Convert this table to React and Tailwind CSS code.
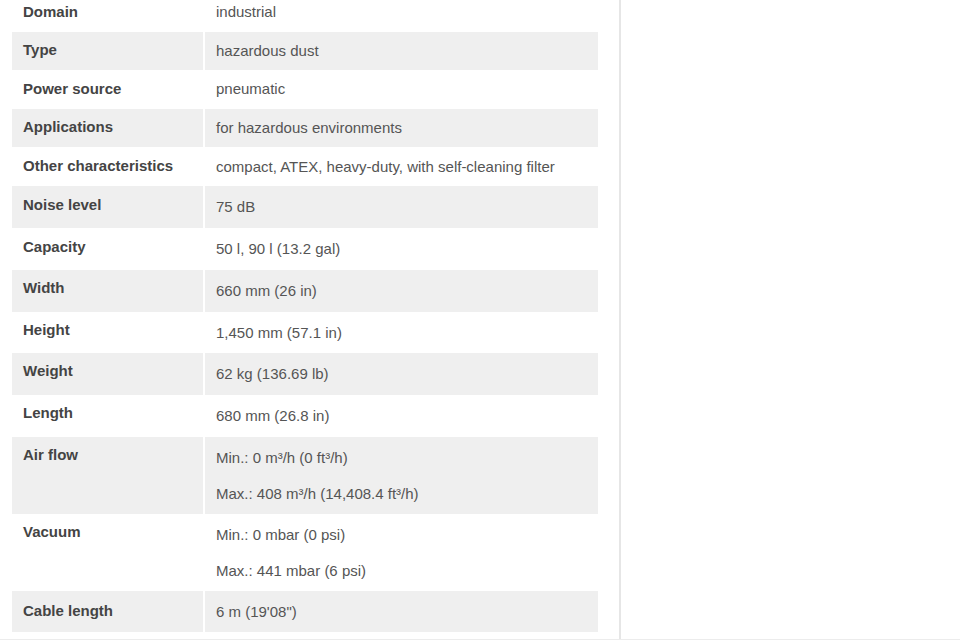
const rows = [
  { label: 'Domain', values: ['industrial'], h: 'h-[32px]', lt: 'pt-[3px]', vt: 'pt-[3px]', gray: false },
  { label: 'Type', values: ['hazardous dust'], h: 'h-[38px]', lt: 'pt-[9px]', vt: 'pt-[10px]', gray: true },
  { label: 'Power source', values: ['pneumatic'], h: 'h-[39px]', lt: 'pt-[10px]', vt: 'pt-[10px]', gray: false },
  { label: 'Applications', values: ['for hazardous environments'], h: 'h-[38px]', lt: 'pt-[9px]', vt: 'pt-[10px]', gray: true },
  { label: 'Other characteristics', values: ['compact, ATEX, heavy-duty, with self-cleaning filter'], h: 'h-[39px]', lt: 'pt-[10px]', vt: 'pt-[11px]', gray: false },
  { label: 'Noise level', values: ['75 dB'], h: 'h-[42px]', lt: 'pt-[10px]', vt: 'pt-[12px]', gray: true },
  { label: 'Capacity', values: ['50 l, 90 l (13.2 gal)'], h: 'h-[42px]', lt: 'pt-[10px]', vt: 'pt-[12px]', gray: false },
  { label: 'Width', values: ['660 mm (26 in)'], h: 'h-[42px]', lt: 'pt-[9px]', vt: 'pt-[12px]', gray: true },
  { label: 'Height', values: ['1,450 mm (57.1 in)'], h: 'h-[41px]', lt: 'pt-[9px]', vt: 'pt-[12px]', gray: false },
  { label: 'Weight', values: ['62 kg (136.69 lb)'], h: 'h-[42px]', lt: 'pt-[9px]', vt: 'pt-[12px]', gray: true },
  { label: 'Length', values: ['680 mm (26.8 in)'], h: 'h-[42px]', lt: 'pt-[9px]', vt: 'pt-[12px]', gray: false },
  { label: 'Air flow', values: ['Min.: 0 m³/h (0 ft³/h)', 'Max.: 408 m³/h (14,408.4 ft³/h)'], h: 'h-[77px]', lt: 'pt-[9px]', vt: 'pt-[12px]', gray: true },
  { label: 'Vacuum', values: ['Min.: 0 mbar (0 psi)', 'Max.: 441 mbar (6 psi)'], h: 'h-[77px]', lt: 'pt-[9px]', vt: 'pt-[12px]', gray: false },
  { label: 'Cable length', values: ["6 m (19'08\")"], h: 'h-[41px]', lt: 'pt-[11px]', vt: 'pt-[12px]', gray: true },
]

export default function App() {
  return (
    <div className="w-[960px] h-[640px] bg-white overflow-hidden font-['Liberation_Sans',Arial,sans-serif] text-[15px] leading-[17px]">
      <div className="flex h-[639px]">
        {/* spec table */}
        <div className="w-[621px] h-full pl-[12px] border-r-2 border-[#e6e6e6]">
          {rows.map((row) => (
            <div key={row.label} className={`flex gap-[2px] ${row.h}`}>
              <div className={`w-[191px] px-[11px] font-bold text-[#444] ${row.lt} ${row.gray ? 'bg-[#efefef]' : ''}`}>
                {row.label}
              </div>
              <div className={`w-[393px] px-[11px] text-[#555] flex flex-col gap-[19px] ${row.vt} ${row.gray ? 'bg-[#efefef]' : ''}`}>
                {row.values.map((v) => (
                  <span key={v}>{v}</span>
                ))}
              </div>
            </div>
          ))}
        </div>
        <div className="flex-1" />
      </div>
      <div className="h-px bg-[#ececec]" />
    </div>
  )
}
